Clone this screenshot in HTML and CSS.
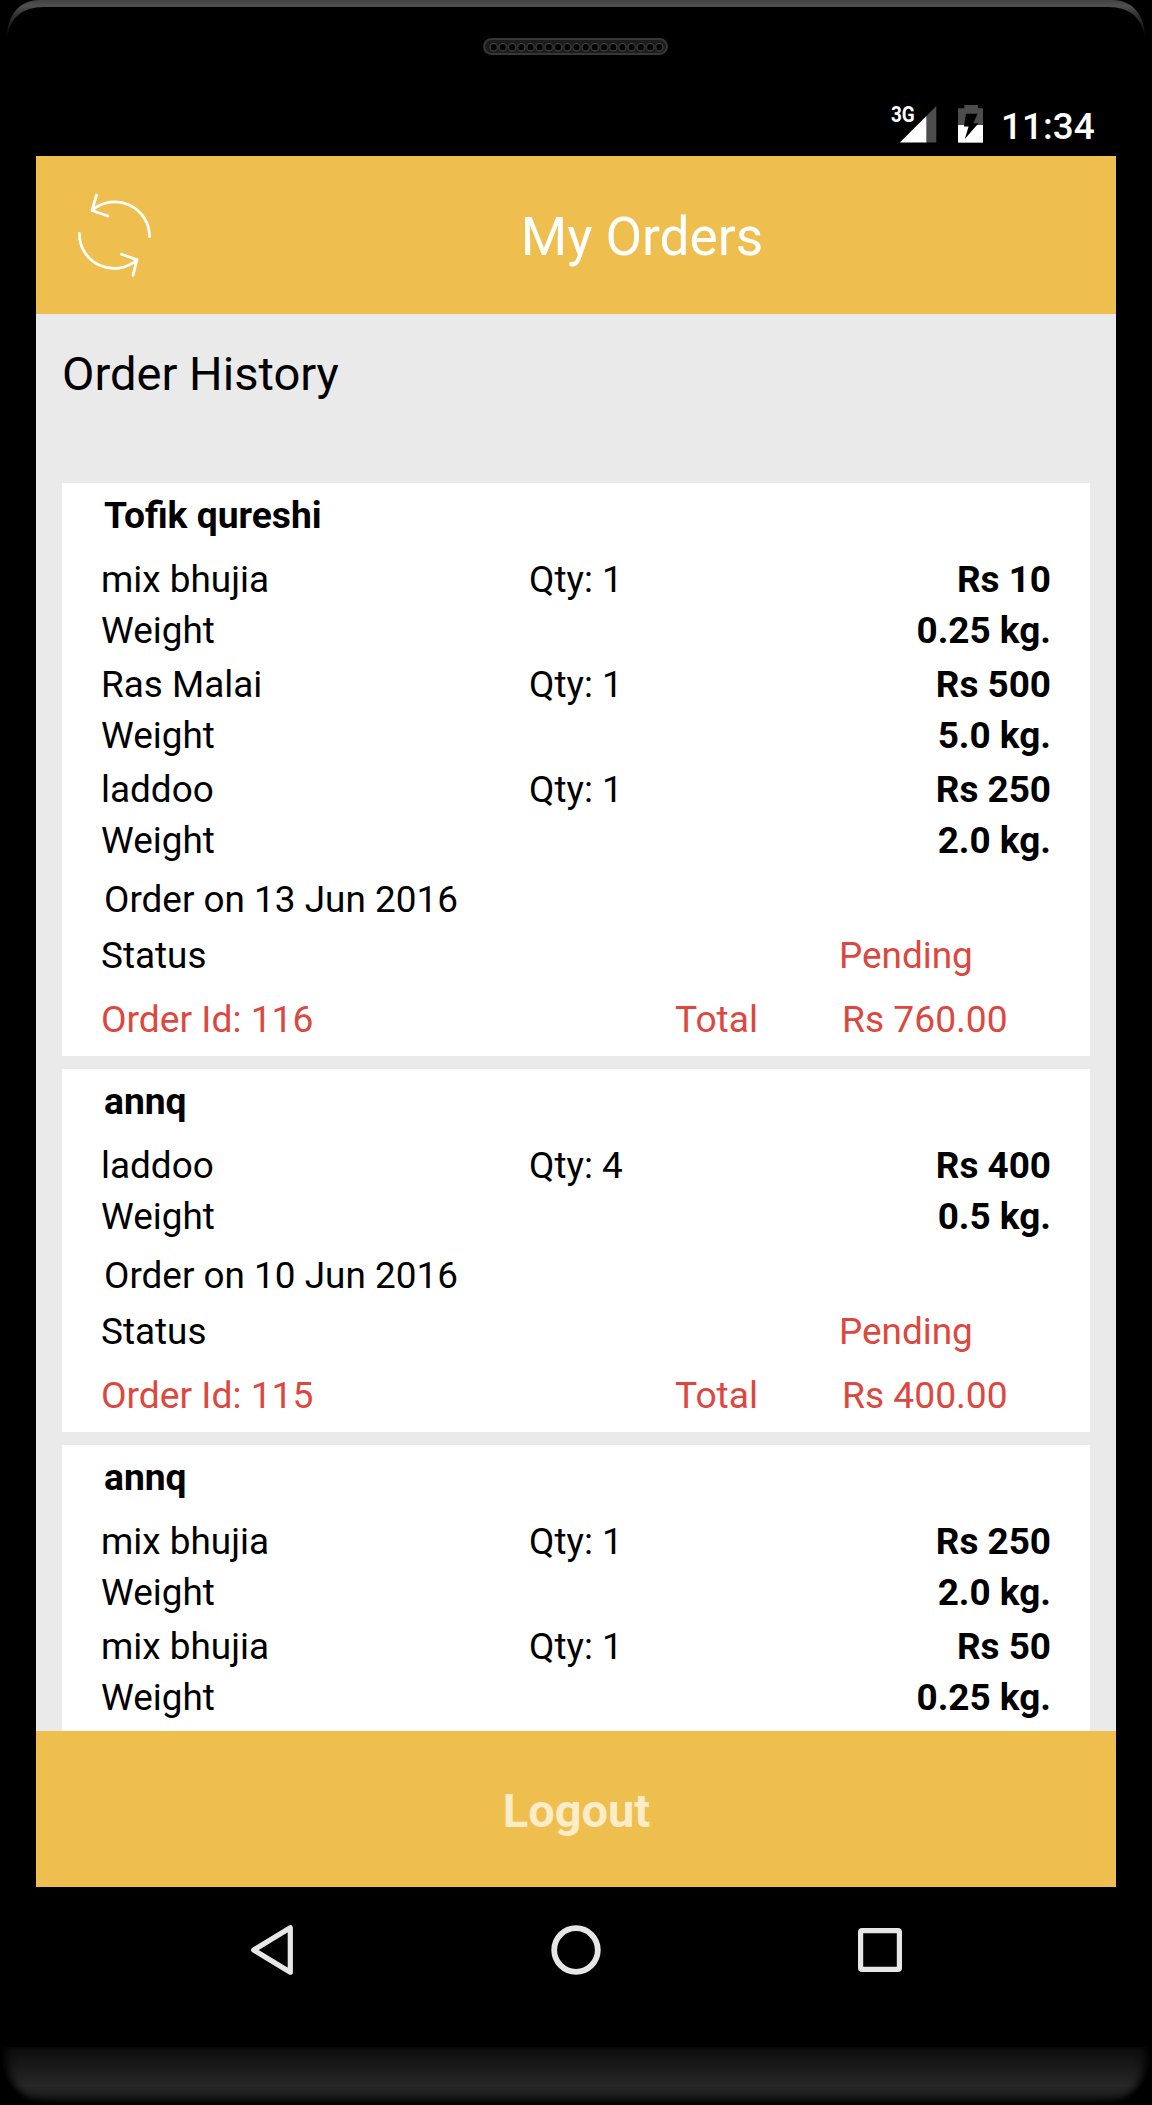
FILE: index.html
```html
<!DOCTYPE html>
<html lang="en">
<head>
<meta charset="utf-8">
<title>My Orders</title>
<link rel="stylesheet" href="styles.css">
</head>
<body>
<div class="device">
  <div class="bezel-top">
    <svg class="rim" width="1152" height="78" viewBox="0 0 1152 78">
      <defs>
        <linearGradient id="rim" gradientUnits="userSpaceOnUse" x1="0" y1="0" x2="0" y2="38">
          <stop offset="0" stop-color="#424242"/>
          <stop offset=".16" stop-color="#505050"/>
          <stop offset=".35" stop-color="#363636"/>
          <stop offset="1" stop-color="#000"/>
        </linearGradient>
        <pattern id="holes" patternUnits="userSpaceOnUse" x="489.1" y="42" width="9.2" height="10">
          <circle cx="4.6" cy="5.2" r="3.7" fill="#000" stroke="#484848" stroke-width="1"/>
        </pattern>
      </defs>
      <path fill="url(#rim)" d="M7 38C7 18 17 0 40 0H1112C1135 0 1145 18 1145 38C1142 18 1130 7 1108 7H44C22 7 10 18 7 38Z"/>
      <rect x="484" y="39" width="183" height="15" rx="7.5" fill="#1c1c1c" stroke="#363636" stroke-width="2"/>
      <rect x="489.1" y="42" width="174.8" height="10" fill="url(#holes)"/>
    </svg>
  </div>

  <div class="status-bar">
    <svg width="48" height="78" viewBox="890 78 48 78">
      <text class="net" x="891" y="122.3" textLength="23.8" lengthAdjust="spacingAndGlyphs">3G</text>
      <path fill="#4d4d4d" d="M926 116.5L936.3 106V142.5H926Z"/>
      <path fill="#fff" d="M899.8 142.5L926.3 116V142.5Z"/>
    </svg>
    <svg class="battery" width="26" height="78" viewBox="958 78 26 78">
      <path fill="#4d4d4d" d="M958 108.3H964.3V105H978V108.3H983V142.6H958Z"/>
      <path fill="#fff" d="M958 125H983V142.6H958Z"/>
      <path fill="#000" d="M966 113.7H977.5L973.3 123.3H978.5L964.8 139L968.6 126.5H964Z"/>
    </svg>
    <span class="clock">11:34</span>
  </div>

  <div class="screen">
    <header class="app-bar">
      <svg class="refresh" width="80" height="90" viewBox="74 190 80 90" fill="none" stroke="#fff" stroke-width="2.8" stroke-linecap="round" stroke-linejoin="round">
        <path d="M149.5 236.7A34.6 34.6 0 0 0 92 210.5M96.5 195L92 210.5L108 216"/>
        <path d="M79.4 233.3A34.6 34.6 0 0 0 137 259.7M121.5 254.2L137 259.7L133 275.3"/>
      </svg>
      <h1 class="title">My Orders</h1>
    </header>

    <main class="content">
      <h2 class="heading">Order History</h2>
      <div class="orders">
        <article class="card">
          <div class="name">Tofik qureshi</div>
          <div class="item">
            <span>mix bhujia</span><span>Qty: 1</span><b>Rs 10</b>
            <span>Weight</span><span></span><b>0.25 kg.</b>
          </div>
          <div class="item">
            <span>Ras Malai</span><span>Qty: 1</span><b>Rs 500</b>
            <span>Weight</span><span></span><b>5.0 kg.</b>
          </div>
          <div class="item">
            <span>laddoo</span><span>Qty: 1</span><b>Rs 250</b>
            <span>Weight</span><span></span><b>2.0 kg.</b>
          </div>
          <div class="date">Order on 13 Jun 2016</div>
          <div class="status"><span>Status</span><span class="red">Pending</span></div>
          <div class="total red"><span>Order Id: 116</span><span>Total</span><span class="sum">Rs 760.00</span></div>
        </article>
        <article class="card">
          <div class="name">annq</div>
          <div class="item">
            <span>laddoo</span><span>Qty: 4</span><b>Rs 400</b>
            <span>Weight</span><span></span><b>0.5 kg.</b>
          </div>
          <div class="date">Order on 10 Jun 2016</div>
          <div class="status"><span>Status</span><span class="red">Pending</span></div>
          <div class="total red"><span>Order Id: 115</span><span>Total</span><span class="sum">Rs 400.00</span></div>
        </article>
        <article class="card card-last">
          <div class="name">annq</div>
          <div class="item">
            <span>mix bhujia</span><span>Qty: 1</span><b>Rs 250</b>
            <span>Weight</span><span></span><b>2.0 kg.</b>
          </div>
          <div class="item">
            <span>mix bhujia</span><span>Qty: 1</span><b>Rs 50</b>
            <span>Weight</span><span></span><b>0.25 kg.</b>
          </div>
        </article>
      </div>
    </main>

    <button class="logout">Logout</button>
  </div>

  <nav class="nav-bar">
    <svg width="50" height="54" viewBox="247 1923 50 54"><path d="M253.7 1950L290.3 1927.8V1972.2Z" fill="none" stroke="#e6e6e6" stroke-width="5.2" stroke-linejoin="round"/></svg>
    <svg width="54" height="54" viewBox="549 1923 54 54"><circle cx="576" cy="1950" r="21.8" fill="none" stroke="#e6e6e6" stroke-width="5.8"/></svg>
    <svg width="50" height="54" viewBox="855 1923 50 54"><rect x="860.6" y="1930.6" width="38.8" height="38.8" rx="1.5" fill="none" stroke="#e6e6e6" stroke-width="5.2"/></svg>
  </nav>

  <div class="bezel-bottom"></div>
</div>
</body>
</html>
```
FILE: styles.css
```css
* { box-sizing: border-box; }

body {
  margin: 0;
  background: #000;
  color: #000;
  font: 36.9px/1 Roboto, sans-serif;
}

.device {
  width: 1152px;
  height: 2105px;
  display: flex;
  flex-direction: column;
  background: #000;
  overflow: hidden;
}

.bezel-top { height: 78px; }
.rim { display: block; }

.status-bar {
  height: 78px;
  padding-right: 57px;
  display: flex;
  justify-content: flex-end;
  color: #fff;
}
.net { font: bold 21.2px Roboto, sans-serif; fill: #fff; }
.battery { margin-left: 20px; }
.clock {
  width: 94px;
  margin-left: 17px;
  padding-top: 19px;
  font-weight: 500;
  line-height: 60px;
}

.screen {
  width: 1080px;
  height: 1731px;
  margin: 0 auto;
  display: flex;
  flex-direction: column;
  background: #eaeaea;
}

.app-bar {
  height: 158px;
  display: flex;
  align-items: center;
  padding-left: 38px;
  background: #eebf4e;
  color: #fff;
}
.title {
  flex: 1;
  margin: 3px 0 0 14px;
  font-size: 53.2px;
  font-weight: 400;
  line-height: 60px;
  text-align: center;
}

.content {
  height: 1417px;
  padding: 0 26px;
  display: flex;
  flex-direction: column;
}
.heading {
  height: 169px;
  margin: 0;
  font-size: 47.1px;
  font-weight: 400;
  line-height: 120px;
}

.orders {
  flex: 1;
  display: flex;
  flex-direction: column;
  gap: 13px;
}
.card {
  padding: 0 39px;
  background: #fff;
}
.card-last { flex: 1; }

.name {
  margin-bottom: 7px;
  padding-left: 3px;
  font-size: 37.2px;
  font-weight: 700;
  line-height: 64px;
}
.item {
  display: grid;
  grid-template-columns: 428px 200px 1fr;
  line-height: 51px;
  padding-bottom: 3px;
}
.item b { text-align: right; }
.date {
  padding: 1px 0 0 3px;
  line-height: 60px;
}
.status {
  display: grid;
  grid-template-columns: 738px 1fr;
  line-height: 52px;
}
.total {
  display: grid;
  grid-template-columns: 574px 167px 1fr;
  font-size: 37.2px;
  line-height: 74px;
}
.red { color: #dc4840; }

.logout {
  height: 156px;
  padding: 4px 0 0 1px;
  border: 0;
  background: #eebf4e;
  color: #fdecc8;
  font: bold 47px/60px Roboto, sans-serif;
}

.nav-bar {
  height: 160px;
  padding: 0 247px 34px;
  display: flex;
  align-items: center;
  justify-content: space-between;
}

.bezel-bottom {
  height: 57px;
  margin: 0 2px;
  border-radius: 0 0 42px 42px / 0 0 50px 50px;
  background: linear-gradient(#0c0c0c, #191919 35%, #272727 68%, #202020 80%, #080808);
  box-shadow: inset 12px 0 10px -8px #000, inset -12px 0 10px -8px #000, inset 0 -4px 6px -3px #000;
}
```
